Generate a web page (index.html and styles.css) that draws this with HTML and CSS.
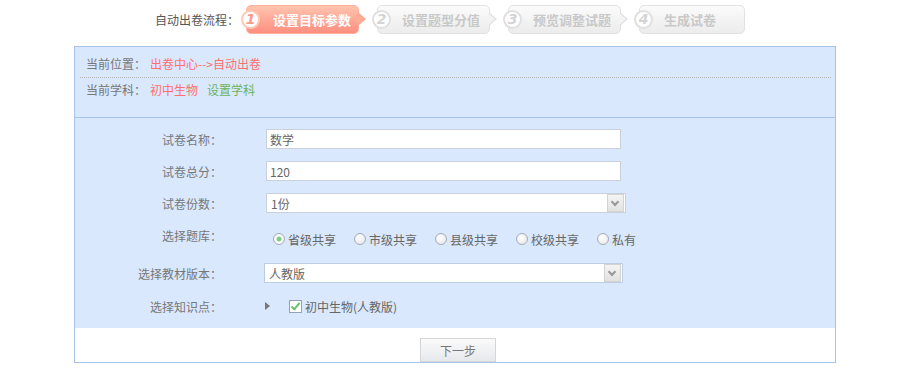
FILE: index.html
```html
<!DOCTYPE html>
<html lang="zh-CN">
<head>
    <meta charset="UTF-8">
    <title>自动出卷</title>
    <link rel="stylesheet" href="styles.css">
</head>
<body>

    <div class="flow">
        <span class="flow-label">自动出卷流程：</span>
        <div class="step active"><span class="num">1</span><span class="step-text">设置目标参数</span></div>
        <div class="step"><span class="num">2</span><span class="step-text">设置题型分值</span></div>
        <div class="step"><span class="num">3</span><span class="step-text">预览调整试题</span></div>
        <div class="step last"><span class="num">4</span><span class="step-text">生成试卷</span></div>
    </div>

    <div class="panel">
        <div class="info">
            <div class="info-row dotted">当前位置：<span class="red">出卷中心--&gt;自动出卷</span></div>
            <div class="info-row">当前学科：<span class="red">初中生物</span><span class="green">设置学科</span></div>
        </div>

        <div class="form">
            <div class="row">
                <label class="lbl">试卷名称：</label>
                <input class="text" type="text" value="数学">
            </div>
            <div class="row">
                <label class="lbl">试卷总分：</label>
                <input class="text" type="text" value="120">
            </div>
            <div class="row">
                <label class="lbl">试卷份数：</label>
                <div class="select wide"><span>1份</span><span class="arrow"></span></div>
            </div>
            <div class="row tall">
                <label class="lbl up">选择题库：</label>
                <div class="radios">
                    <span class="radio on"></span><span class="opt">省级共享</span>
                    <span class="radio"></span><span class="opt">市级共享</span>
                    <span class="radio"></span><span class="opt">县级共享</span>
                    <span class="radio"></span><span class="opt">校级共享</span>
                    <span class="radio"></span><span class="opt">私有</span>
                </div>
            </div>
            <div class="row short">
                <label class="lbl">选择教材版本：</label>
                <div class="select shift"><span>人教版</span><span class="arrow"></span></div>
            </div>
            <div class="row last">
                <label class="lbl">选择知识点：</label>
                <span class="tri"></span>
                <span class="check"></span><span class="opt">初中生物(人教版)</span>
            </div>
        </div>

        <div class="actions">
            <button class="btn">下一步</button>
        </div>
    </div>

</body>
</html>
```

FILE: styles.css
```css
body {
    margin: 0;
    font-family: "Noto Sans CJK SC", "DejaVu Sans", sans-serif;
    font-size: 12px;
    color: #666;
    background: #fff;
}

/* 流程条 */
.flow {
    display: flex;
    align-items: center;
    height: 38px;
    padding-left: 155px;
}

.flow-label {
    color: #555;
    margin-right: 3px;
}

.step {
    position: relative;
    display: flex;
    align-items: center;
    box-sizing: border-box;
    width: 113px;
    height: 29px;
    margin-left: 4px;
    margin-right: 14px;
    border: 1px solid #e2e2e2;
    border-radius: 5px;
    background: linear-gradient(#fbfbfb, #ececec);
}

.step::before,
.step::after {
    content: "";
    position: absolute;
    top: 50%;
    width: 0;
    height: 0;
    border-style: solid;
}

.step::before {
    right: -8px;
    margin-top: -7px;
    border-width: 7px 0 7px 8px;
    border-color: transparent transparent transparent #e2e2e2;
}

.step::after {
    right: -6px;
    margin-top: -6px;
    border-width: 6px 0 6px 7px;
    border-color: transparent transparent transparent #f3f3f3;
}

.step.last {
    width: 106px;
}

.step.last::before,
.step.last::after {
    display: none;
}

.num {
    display: flex;
    align-items: center;
    justify-content: center;
    box-sizing: border-box;
    width: 19px;
    height: 19px;
    margin-left: -6px;
    border: 2px solid #e0e0e0;
    border-radius: 50%;
    background: #fff;
    color: #d4d4d4;
    font-family: "DejaVu Sans", sans-serif;
    font-size: 14px;
    font-weight: bold;
    font-style: italic;
}

.step-text {
    margin-left: 11px;
    color: #c9c9c9;
    font-size: 13px;
    font-weight: bold;
}

.step.active {
    border-color: #ffb09c;
    background: linear-gradient(#ffc4ad, #ff8e80);
}

.step.active::before {
    border-left-color: #ffaa92;
}

.step.active::after {
    border-left-color: #ffac95;
}

.step.active .num {
    border-color: #ffc9b8;
    color: #ff9a86;
}

.step.active .step-text {
    color: #fff;
    margin-left: 13px;
}

/* 面板 */
.panel {
    width: 760px;
    margin: 8px 0 0 74px;
    border: 1px solid #a8c3e8;
}

.info {
    background: #d9e8fd;
    padding: 4px 4px 15px 5px;
    border-bottom: 1px solid #a8c3e8;
}

.info-row {
    height: 24px;
    line-height: 24px;
    padding-left: 6px;
    color: #777;
}

.info-row.dotted {
    height: 26px;
    line-height: 26px;
    border-bottom: 1px dotted #b5b5b5;
}

.red {
    color: #ff6f6f;
    margin-left: 4px;
}

.green {
    color: #6cb35e;
    margin-left: 9px;
}

.form {
    background: #d9e8fd;
    padding: 5px 0 3px;
}

.row {
    display: flex;
    align-items: center;
    height: 32px;
}

.row.tall {
    height: 40px;
}

.row.short {
    height: 28px;
}

.row.last {
    height: 38px;
}

.lbl {
    width: 147px;
    margin-right: 44px;
    text-align: right;
    color: #777;
}

.lbl.up {
    margin-top: -8px;
}

.text {
    box-sizing: border-box;
    width: 355px;
    height: 20px;
    padding: 0 3px;
    border: 1px solid #c9d0da;
    background: #fff;
    color: #666;
    font-family: inherit;
    font-size: 12px;
    outline: none;
}

.select {
    display: flex;
    align-items: center;
    justify-content: space-between;
    box-sizing: border-box;
    width: 360px;
    height: 20px;
    padding: 0 1px 0 4px;
    border: 1px solid #c9d0da;
    background: #fff;
}

.select.shift {
    margin-left: -2px;
    width: 359px;
    border-color: #bfcde0;
}

.arrow {
    position: relative;
    box-sizing: border-box;
    width: 17px;
    height: 18px;
    border: 1px solid #d3d3d3;
    background: linear-gradient(#f4f4f4, #e2e2e2);
}

.arrow::after {
    content: "";
    position: absolute;
    left: 4px;
    top: 4px;
    width: 4px;
    height: 4px;
    border-right: 2px solid #999;
    border-bottom: 2px solid #999;
    transform: rotate(45deg);
}

.radios {
    display: flex;
    align-items: center;
    margin-left: 7px;
}

.radio {
    box-sizing: border-box;
    width: 12px;
    height: 12px;
    margin-right: 3px;
    border: 1px solid #a3acb9;
    border-radius: 50%;
    background: radial-gradient(circle at 40% 35%, #fff, #e4e4e4);
}

.radio.on {
    background: radial-gradient(circle, #7dcf7d 0 2px, #fff 3px, #e8e8e8);
}

.opt {
    color: #666;
    margin-right: 18px;
}

.tri {
    width: 0;
    height: 0;
    margin-left: -1px;
    margin-right: 19px;
    border-style: solid;
    border-width: 4px 0 4px 5px;
    border-color: transparent transparent transparent #777;
}

.check {
    position: relative;
    box-sizing: border-box;
    width: 13px;
    height: 13px;
    margin-right: 3px;
    border: 1px solid #8fa2ba;
    background: #fff;
}

.check::after {
    content: "";
    position: absolute;
    left: 3px;
    top: 0;
    width: 3px;
    height: 7px;
    border-right: 2px solid #6cc06c;
    border-bottom: 2px solid #6cc06c;
    transform: rotate(40deg);
}

.actions {
    background: #fff;
    height: 34px;
    padding-top: 10px;
    box-sizing: border-box;
    text-align: center;
}

.btn {
    width: 76px;
    height: 24px;
    margin-left: 6px;
    border: 1px solid #d6d6d6;
    background: linear-gradient(#fafafa, #e6e9ec);
    color: #777;
    font-family: inherit;
    font-size: 12px;
    padding: 0;
}
```
